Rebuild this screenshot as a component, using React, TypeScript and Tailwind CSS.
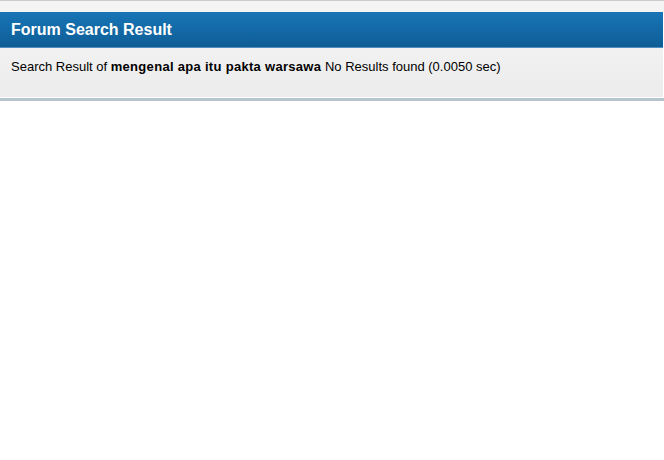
const App = () => {
  return (
    <div className="min-h-[460px] w-[664px] bg-white font-['Liberation_Sans',Arial,sans-serif]">
      {/* top strip */}
      <div className="h-[12px] border-t border-[#cccccc] bg-[#f4f4f4]" />

      {/* panel */}
      <div className="w-[663px]">
        <div className="flex h-[35px] items-center bg-gradient-to-b from-[#1875b6] to-[#0e5e96] px-[11px]">
          <h1 className="text-[16px] font-bold leading-none text-white">
            Forum Search Result
          </h1>
        </div>
        <div className="h-[1px] bg-[#4f8fbf]" />
        <div className="h-[49px] bg-gradient-to-b from-[#f1f1f1] to-[#ececec] px-[11px] pt-[11px]">
          <p className="text-[13px] leading-[15px] text-black">
            Search Result of{" "}
            <b className="tracking-[0.3px]">mengenal apa itu pakta warsawa</b>{" "}
            No Results found (0.0050 sec)
          </p>
        </div>
        <div className="h-[1px] bg-white" />
      </div>
      <div className="h-[3px] bg-[#b6c4cd]" />
    </div>
  );
};

export default App;
